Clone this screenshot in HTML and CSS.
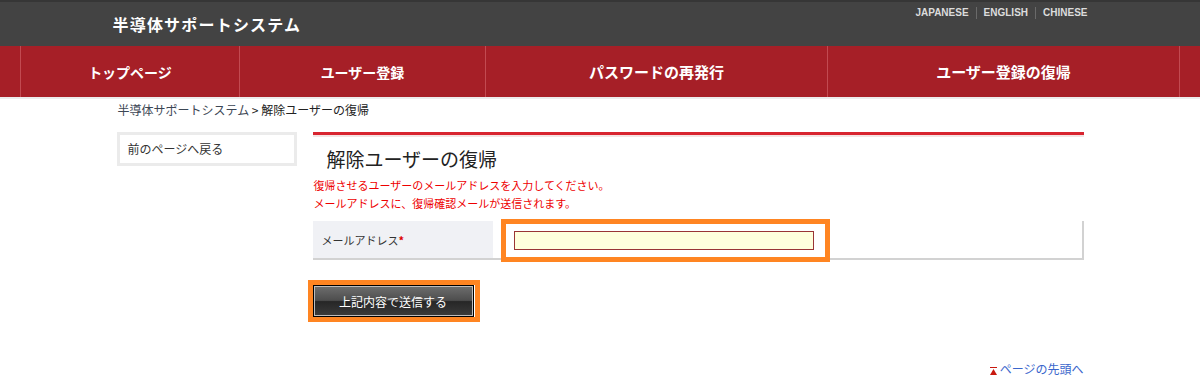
FILE: index.html
```html
<!DOCTYPE html>
<html lang="ja">
<head>
    <meta charset="UTF-8">
    <title>解除ユーザーの復帰 | 半導体サポートシステム</title>
    <link rel="stylesheet" href="styles.css">
</head>
<body>
    <div class="header">
        <div class="header-inner">
            <div class="site-title">半導体サポートシステム</div>
            <ul class="lang">
                <li><a href="#">JAPANESE</a></li>
                <li><a href="#">ENGLISH</a></li>
                <li><a href="#">CHINESE</a></li>
            </ul>
        </div>
    </div>

    <div class="gnav">
        <ul>
            <li class="nav-top"><a href="#">トップページ</a></li>
            <li class="nav-reg"><a href="#">ユーザー登録</a></li>
            <li class="nav-pass"><a href="#">パスワードの再発行</a></li>
            <li class="nav-restore"><a href="#">ユーザー登録の復帰</a></li>
        </ul>
    </div>

    <div class="container">
        <div class="breadcrumb">
            <a href="#">半導体サポートシステム</a> &gt; 解除ユーザーの復帰
        </div>

        <div class="columns">
            <div class="side">
                <a href="#" class="back">前のページへ戻る</a>
            </div>

            <div class="main">
                <div class="main-line"></div>
                <h2>解除ユーザーの復帰</h2>
                <p class="note">復帰させるユーザーのメールアドレスを入力してください。<br>メールアドレスに、復帰確認メールが送信されます。</p>

                <table class="form">
                    <tr>
                        <th>メールアドレス<span class="req">*</span></th>
                        <td><span class="hl hl-input"><input type="text" class="txt"></span></td>
                    </tr>
                </table>

                <div class="submit">
                    <span class="hl hl-btn"><button type="submit" class="btn">上記内容で送信する</button></span>
                </div>
            </div>
        </div>

        <div class="pagetop">
            <a href="#"><svg class="arrow" width="7" height="8" viewBox="0 0 7 8"><rect x="0" y="0" width="7" height="1" fill="#c8190f"/><polygon points="3.5,2 7,8 0,8" fill="#c8190f"/></svg>ページの先頭へ</a>
        </div>
    </div>
</body>
</html>
```

FILE: styles.css
```css
* {
    margin: 0;
    padding: 0;
    box-sizing: border-box;
}

body {
    font-family: "Noto Sans CJK JP", "Noto Sans", sans-serif;
    background-color: #fff;
    color: #333;
    font-size: 12px;
}

a {
    text-decoration: none;
    color: inherit;
}

ul {
    list-style: none;
}

/* header */
.header {
    background-color: #434343;
    border-top: 2px solid #363636;
    height: 46px;
}

.header-inner {
    width: 975px;
    margin: 0 auto;
    display: flex;
    justify-content: space-between;
    align-items: flex-start;
}

.site-title {
    color: #fff;
    font-size: 16px;
    font-weight: bold;
    line-height: 20px;
    padding-top: 12px;
    letter-spacing: 1.2px;
}

.lang {
    display: flex;
    padding-top: 5px;
    font-family: "Liberation Sans", Arial, sans-serif;
    font-size: 10px;
    font-weight: bold;
    line-height: 12px;
}

.lang li {
    padding: 0 7px;
    border-left: 1px solid #6a6a6a;
}

.lang li:first-child {
    border-left: none;
}

.lang li:last-child {
    padding-right: 0;
}

.lang a {
    color: #dcdcdc;
}

/* global nav */
.gnav {
    background-color: #a61f27;
    border-bottom: 2px solid #ececec;
}

.gnav ul {
    display: flex;
    margin-left: 20px;
    height: 51px;
}

.gnav li {
    border-left: 1px solid #c24a51;
    display: flex;
    align-items: center;
    justify-content: center;
}

.gnav li a {
    color: #fff;
    font-weight: bold;
    font-size: 14px;
}

.nav-top { width: 219px; }
.nav-reg { width: 246px; }
.nav-pass { width: 342px; }
.nav-pass a, .nav-restore a { font-size: 15px !important; }
.nav-restore {
    width: 353px;
    border-right: 1px solid #c24a51;
}

/* content */
.container {
    width: 967px;
    margin: 0 auto;
}

.breadcrumb {
    padding: 3px 1px 0;
    line-height: 16px;
    color: #222;
}

.breadcrumb a {
    color: #3c4654;
}

.columns {
    display: flex;
    margin-top: 14px;
}

.side {
    width: 180px;
}

.back {
    display: block;
    border: 3px solid #ebebeb;
    padding: 6px 8px;
    line-height: 16px;
    color: #333;
    height: 34px;
}

.main {
    width: 771px;
    margin-left: 16px;
}

.main-line {
    border-top: 3px solid #d8242f;
    border-bottom: 2px solid #f4e4e4;
}

.main h2 {
    font-size: 19px;
    font-weight: normal;
    color: #222;
    line-height: 24px;
    margin-top: 10px;
    padding-left: 14px;
}

.note {
    color: #e00;
    font-size: 11px;
    line-height: 18px;
    margin-top: 5px;
    padding-left: 1px;
}

.form {
    width: 771px;
    border-collapse: collapse;
    margin-top: 9px;
    border-right: 2px solid #d2d2d2;
    border-bottom: 2px solid #d2d2d2;
}

.form th {
    width: 180px;
    background-color: #f0f1f5;
    text-align: left;
    font-weight: normal;
    font-size: 11px;
    color: #333;
    padding: 0 9px;
    height: 38px;
    vertical-align: middle;
}

.req {
    color: #d00;
    font-weight: bold;
}

.form td {
    padding-left: 21px;
    vertical-align: middle;
}

.txt {
    display: block;
    width: 300px;
    height: 19px;
    background-color: #ffffdc;
    border: 1px solid #9a3535;
}

/* orange marks over the screenshot */
.hl {
    position: relative;
    display: inline-block;
    vertical-align: middle;
}

.hl::after {
    content: "";
    position: absolute;
    border: 5px solid #ff8522;
}

.hl-input::after {
    top: -12px;
    bottom: -12px;
    left: -13px;
    right: -16px;
}

.hl-btn::after {
    top: -5px;
    bottom: -5px;
    left: -5px;
    right: -6px;
}

.submit {
    margin-top: 25px;
}

.btn {
    display: block;
    width: 161px;
    height: 32px;
    border: 1px solid #000;
    box-shadow: inset 0 0 0 1px #bdbdbd;
    background: linear-gradient(to bottom, #6e6e6e 0%, #4d4d4d 48%, #262626 52%, #3b3b3b 100%);
    color: #fff;
    font-family: "Noto Sans CJK JP", sans-serif;
    font-size: 12px;
    cursor: pointer;
}

.pagetop {
    text-align: right;
    margin-top: 44px;
    line-height: 16px;
}

.pagetop a {
    color: #3a66cc;
}

.arrow {
    margin-right: 3px;
    vertical-align: -1px;
}
```
